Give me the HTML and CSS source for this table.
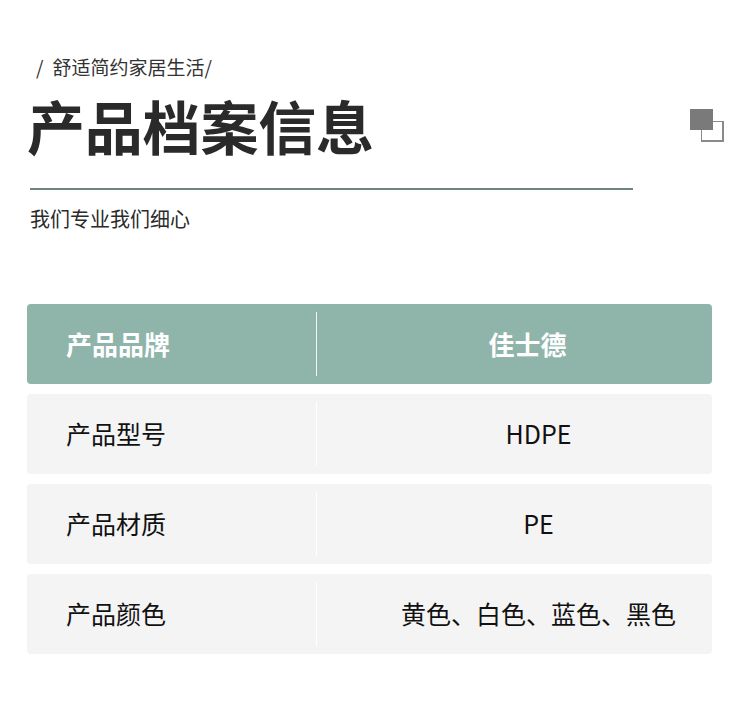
FILE: index.html
```html
<!DOCTYPE html>
<html lang="zh-CN">
<head>
<meta charset="utf-8">
<title>产品档案信息</title>
<link rel="stylesheet" href="styles.css">
</head>
<body>
<div class="page">
  <header class="head">
    <p class="tagline"><span class="slash">/</span>舒适简约家居生活/</p>
    <div class="title-row">
      <h1 class="title">产品档案信息</h1>
      <div class="deco">
        <span class="deco-fill"></span>
        <span class="deco-line"></span>
      </div>
    </div>
    <div class="rule"></div>
    <p class="motto">我们专业我们细心</p>
  </header>
  <section class="table">
    <div class="row row-head">
      <div class="cell label">产品品牌</div>
      <div class="cell value">佳士德</div>
    </div>
    <div class="row">
      <div class="cell label">产品型号</div>
      <div class="cell value">HDPE</div>
    </div>
    <div class="row">
      <div class="cell label">产品材质</div>
      <div class="cell value">PE</div>
    </div>
    <div class="row">
      <div class="cell label">产品颜色</div>
      <div class="cell value">黄色、白色、蓝色、黑色</div>
    </div>
  </section>
</div>
</body>
</html>
```
FILE: styles.css
```css
* { box-sizing: border-box; }
html, body { margin: 0; padding: 0; background: #fff; }
body {
  font-family: "Noto Sans CJK SC", "Noto Sans", sans-serif;
  color: #222;
}
.page {
  width: 750px;
  height: 703px;
  padding: 54px 38px 0 27px;
}
.head { margin: 0; }
.tagline {
  margin: 0 0 0 9px;
  font-size: 19px;
  line-height: 26px;
  color: #333;
}
.slash { margin-right: 9px; }
.title-row {
  display: flex;
  justify-content: space-between;
  align-items: flex-start;
  margin-top: 10px;
}
.title {
  margin: 0;
  font-size: 58px;
  font-weight: 700;
  line-height: 70px;
  color: #2a2a2a;
  letter-spacing: -0.2px;
}
.deco {
  position: relative;
  width: 35px;
  height: 33px;
  margin-top: 19px;
  margin-right: -13px;
}
.deco-fill {
  position: absolute;
  left: 0;
  top: 0;
  width: 23px;
  height: 21px;
  background: #7a7a7a;
  z-index: 1;
}
.deco-line {
  position: absolute;
  left: 11px;
  top: 12px;
  width: 23px;
  height: 21px;
  border: 2px solid #8a8a8a;
  border-left-width: 1px;
  border-top-width: 1px;
}
.rule {
  margin: 28px 0 0 3px;
  width: 603px;
  height: 2px;
  background: #6f8480;
}
.motto {
  margin: 15px 0 0 3px;
  font-size: 20px;
  line-height: 28px;
  color: #2a2a2a;
}
.table {
  margin-top: 71px;
  display: flex;
  flex-direction: column;
  gap: 10px;
  width: 685px;
}
.row {
  display: flex;
  height: 80px;
  background: #f4f4f4;
  border-radius: 4px;
  align-items: center;
}
.cell {
  height: 100%;
  display: flex;
  align-items: center;
  font-size: 25px;
  color: #111;
  padding-bottom: 2px;
}
.label {
  width: 290px;
  padding-left: 39px;
  border-right: 1px solid #fff;
  height: 64px;
}
.value {
  flex: 1;
  justify-content: center;
  padding-left: 48px;
}
.row-head {
  background: #8fb5ab;
}
.row-head .cell {
  color: #fff;
  font-weight: 700;
  font-size: 26px;
}
.row-head .label { border-right-color: #f2f7f5; }
.row-head .value { padding-left: 26px; }
```
